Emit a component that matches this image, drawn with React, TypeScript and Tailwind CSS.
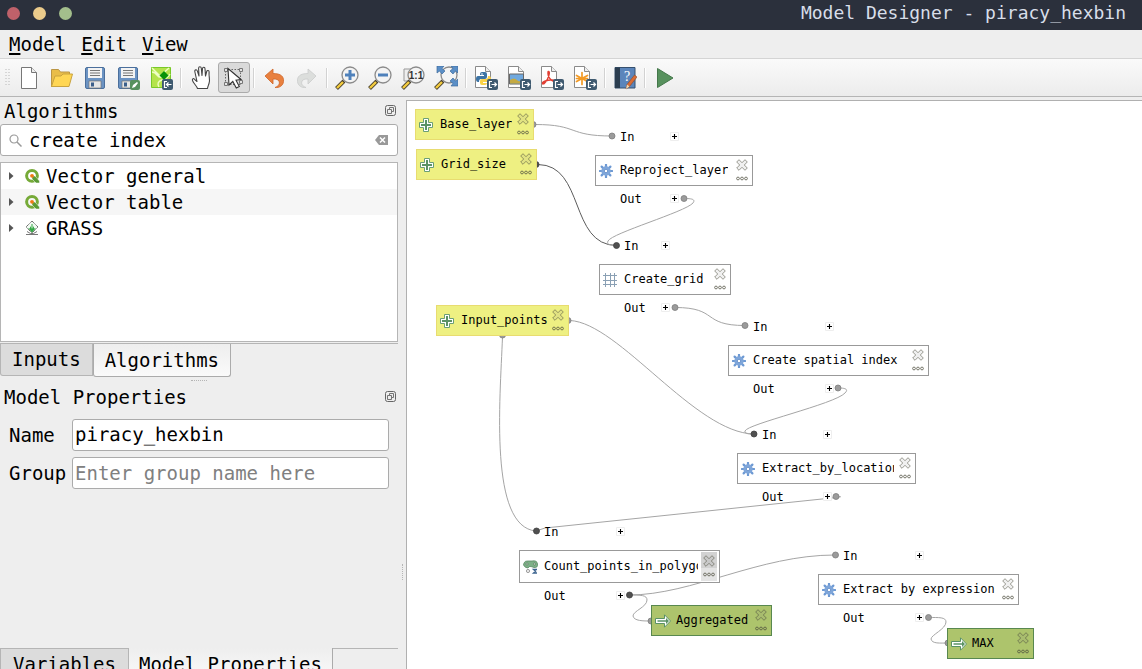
import React from "react";

type NodeKind = "input" | "algorithm" | "output";
type IconName = "plus" | "gear" | "grid" | "count" | "arrow";

interface ModelNode {
  label: string;
  kind: NodeKind;
  icon: IconName;
  x: number;
  y: number;
  w: number;
  h: number;
  hovered?: boolean;
}

const nodes: ModelNode[] = [
  { label: "Base_layer", kind: "input", icon: "plus", x: 8, y: 8, w: 119, h: 31 },
  { label: "Grid_size", kind: "input", icon: "plus", x: 9, y: 48, w: 121, h: 31 },
  { label: "Reproject_layer", kind: "algorithm", icon: "gear", x: 188, y: 54, w: 158, h: 31 },
  { label: "Create_grid", kind: "algorithm", icon: "grid", x: 192, y: 163, w: 132, h: 31 },
  { label: "Input_points", kind: "input", icon: "plus", x: 29, y: 204, w: 133, h: 31 },
  { label: "Create spatial index", kind: "algorithm", icon: "gear", x: 321, y: 244, w: 201, h: 31 },
  { label: "Extract_by_location", kind: "algorithm", icon: "gear", x: 330, y: 352, w: 179, h: 31 },
  { label: "Count_points_in_polygon", kind: "algorithm", icon: "count", x: 112, y: 449, w: 201, h: 33, hovered: true },
  { label: "Aggregated", kind: "output", icon: "arrow", x: 244, y: 504, w: 121, h: 31 },
  { label: "Extract by expression", kind: "algorithm", icon: "gear", x: 411, y: 473, w: 201, h: 31 },
  { label: "MAX", kind: "output", icon: "arrow", x: 540, y: 527, w: 87, h: 31 },
];

const edges: { d: string; dark?: boolean }[] = [
  { d: "M128 23.5 C172 23.5 160 35 205 35" },
  { d: "M131 63.5 C178 64 162 144 209.500 144.500", dark: true },
  { d: "M277 97.500 C284 97.500 289 98 286 102 C278 111 205 132 201 140 C199 144 205 144.500 209.500 144.500" },
  { d: "M268 206.500 C312 206.500 294 224.500 338 224.500" },
  { d: "M163 219.500 C212 222 288 332 347 333" },
  { d: "M95.500 236 C93 300 82 426 129 430" },
  { d: "M431 287 C438 287 442 288 438 292 C428 303 340 323 338 330 C337 333 343 333 347 333" },
  { d: "M429 395.500 C438 395.500 434 396 415 398 L138 427 L129 430" },
  { d: "M222 494 C285 494 352 454 428 454" },
  { d: "M222 494 C234 494 240 494 240 499 C240 506 226 510 226 515 C227 520 236 520 244 520" },
  { d: "M521.500 516.500 C532 516.500 539 516 539 521 C539 528 524 534 524 538 C525 543 533 542 541 542" },
];

const sockets: { x: number; y: number; dark?: boolean }[] = [
  { x: 126, y: 23.5 },
  { x: 129, y: 63.5, dark: true },
  { x: 205, y: 35 },
  { x: 277, y: 97.5 },
  { x: 209.5, y: 144.5, dark: true },
  { x: 268, y: 206.5 },
  { x: 338, y: 224.5 },
  { x: 161, y: 219.5 },
  { x: 95.5, y: 234 },
  { x: 431, y: 287 },
  { x: 347, y: 333, dark: true },
  { x: 429, y: 395.5 },
  { x: 129.5, y: 430, dark: true },
  { x: 222.5, y: 494, dark: true },
  { x: 428.5, y: 454 },
  { x: 244, y: 520 },
  { x: 521.5, y: 516.5 },
  { x: 541, y: 542 },
];

const nodeColours: Record<NodeKind, string> = {
  input: "border-[#e8dc70] bg-[#eef082]",
  algorithm: "border-[#999999] bg-white",
  output: "border-[#58884f] bg-[#adc46c]",
};

function NodeIcon({ name }: { name: IconName }) {
  if (name === "plus")
    return (
      <svg viewBox="0 0 14 14" className="size-3.5 shrink-0">
        <path d="M4.500 .5h5v4h4v5h-4v4h-5v-4h-4v-5h4z" fill="#fff" stroke="#6b9f74" />
        <path d="M6 2h2v4h4v2H8v4H6V8H2V6h4z" fill="#5a9265" />
      </svg>
    );
  if (name === "gear")
    return (
      <svg viewBox="0 0 14 14" className="size-3.5 shrink-0">
        {[0, 45, 90, 135].map((a) => (
          <path key={a} d="M7 .8v12.400" stroke="#6d99d3" strokeWidth="2.200" strokeLinecap="round" transform={`rotate(${a} 7 7)`} />
        ))}
        <circle cx="7" cy="7" r="4.700" fill="#7fa6da" />
        <circle cx="7" cy="7" r="1.700" fill="#fff" stroke="#5583c0" strokeWidth=".7" />
      </svg>
    );
  if (name === "grid")
    return (
      <svg viewBox="0 0 14 14" className="size-3.5 shrink-0">
        <path d="M2.500 0v14M7.500 0v14M11.500 0v14M0 2.500h14M0 7.500h14M0 11.500h14" stroke="#8aa0b4" fill="none" />
      </svg>
    );
  if (name === "count")
    return (
      <svg viewBox="0 0 15 14" className="h-3.5 w-[15px] shrink-0">
        <path d="M1 3Q2 .5 5 1L9 1Q14 0 14.500 4Q15 8 11 7.500L8 6.500Q6 6 5 8Q2 8 .5 5z" fill="#7db087" stroke="#5b8965" strokeWidth=".8" />
        <circle cx="4" cy="4" r="1" fill="#e8f2e9" stroke="#44664a" strokeWidth=".6" />
        <circle cx="11.500" cy="4" r="1" fill="#e8f2e9" stroke="#44664a" strokeWidth=".6" />
        <circle cx="5" cy="11" r="1.600" fill="#eee" stroke="#888" strokeWidth=".8" />
        <path d="M14 9.500h-3.500l2 1.700-2 1.800H14" fill="none" stroke="#3e6590" strokeWidth="1.300" />
      </svg>
    );
  return (
    <svg viewBox="0 0 16 14" className="h-3.5 w-4 shrink-0">
      <path d="M.5 4.500h9V.8L15.500 7l-6 6.200V9.500h-9z" fill="#fff" stroke="#5a9265" />
      <path d="M2.500 6.200h8.500V4l3 3-3 3V7.800H2.500z" fill="#5a9265" />
    </svg>
  );
}

function NodeControls({ hovered }: { hovered?: boolean }) {
  return (
    <div className={hovered ? "my-px flex w-4 shrink-0 flex-col items-center gap-1 bg-[#e4e4e4]" : "flex w-4 shrink-0 flex-col items-center gap-1"}>
      <button aria-label="Delete" className={hovered ? "flex w-4 justify-center bg-[#d2d2d2] pb-px pt-[3px]" : "flex w-4 justify-center pb-px pt-[3px]"}>
        <svg viewBox="0 0 12 12" className="size-3">
          <path
            d="M3 .7L6 3.700 9 .7 11.300 3 8.300 6l3 3L9 11.300l-3-3-3 3L.7 9l3-3-3-3z"
            fill="#808080"
            fillOpacity=".12"
            stroke="#4d4d3d"
            strokeOpacity=".62"
            strokeWidth=".9"
            strokeLinejoin="round"
          />
        </svg>
      </button>
      <button aria-label="Edit" className="block">
        <svg viewBox="0 0 12 5" className="h-[5px] w-3">
          {[2, 6, 10].map((x) => (
            <circle key={x} cx={x} cy="2.500" r="1.400" fill="none" stroke="#4d4d3d" strokeOpacity=".8" strokeWidth=".9" />
          ))}
        </svg>
      </button>
    </div>
  );
}

function Port({ label, above }: { label: string; above?: boolean }) {
  return (
    <div
      className={
        above
          ? "absolute -top-[27px] left-0 flex h-4 w-full items-center"
          : "absolute -bottom-5 left-0 flex h-4 w-full items-center"
      }
    >
      <span className="w-1/2 pl-[25px] pt-0.5">{label}</span>
      <button aria-label={`Expand ${label}`} className="-ml-1 bg-white">
        <svg viewBox="0 0 9 9" className="size-[9px]">
          <path d="M.5 .5h8v8h-8z" fill="#fff" stroke="#eeeeee" />
          <path d="M4.500 2v5M2 4.500h5" stroke="#000" strokeWidth="1.100" />
        </svg>
      </button>
    </div>
  );
}

function Canvas() {
  return (
    <main className="relative mt-[3px] min-w-0 flex-1 overflow-hidden border-l border-t border-[#b0b0b0] bg-white font-['DejaVu_Sans_Mono',monospace] text-[12px] leading-4">
      <svg className="absolute left-0 top-0 size-full" fill="none">
        {edges.map((e) => (
          <path key={e.d} d={e.d} stroke={e.dark ? "#5c5c5c" : "#a5a5a5"} />
        ))}
        {sockets.map((s) => (
          <circle
            key={`${s.x}-${s.y}`}
            cx={s.x}
            cy={s.y}
            r="3"
            fill={s.dark ? "#505050" : "#9b9b9b"}
            stroke={s.dark ? "#404040" : "#7d7d7d"}
            strokeWidth=".8"
          />
        ))}
      </svg>
      {nodes.map((n) => (
        <section key={n.label} className="absolute" style={{ left: n.x, top: n.y, width: n.w, height: n.h }}>
          {n.kind === "algorithm" && <Port label="In" above />}
          <div className={`flex h-full border pr-0.5 ${nodeColours[n.kind]}`}>
            <div className="mr-[3px] flex min-w-0 flex-1 items-center">
              <div className="flex w-6 shrink-0 pl-[3px]">
                <NodeIcon name={n.icon} />
              </div>
              <span className="overflow-hidden whitespace-nowrap pb-0.5">{n.label}</span>
            </div>
            <NodeControls hovered={n.hovered} />
          </div>
          {n.kind === "algorithm" && <Port label="Out" />}
        </section>
      ))}
    </main>
  );
}

/* ---------- toolbar drawings ---------- */

function ExportSheet({ children }: { children: React.ReactNode }) {
  return (
    <>
      <g transform="translate(-2 -1)">
        <path d="M3.500 1.500h10l5 5v16h-15z" fill="#fff" stroke="#8a8a8a" />
        <path d="M13.500 1.500v5h5" fill="#eee" stroke="#8a8a8a" />
        {children}
      </g>
      <rect x="13" y="13" width="11" height="11" rx="2" fill="#3f5a70" />
      <path d="M18 15.500h-2.500v6H18M17.500 18.500h5M20.500 16.500l2 2-2 2" fill="none" stroke="#fff" strokeWidth="1.200" />
    </>
  );
}

function Lens({ children }: { children?: React.ReactNode }) {
  return (
    <>
      <path d="M9 15L1.500 22.500" stroke="#4b4230" strokeWidth="4" />
      <path d="M8 16L2 22" stroke="#f4cc3e" strokeWidth="2.400" />
      <circle cx="15" cy="9" r="8" fill="#f4f4f4" stroke="#8b8b8b" strokeWidth="1.300" />
      {children}
    </>
  );
}

function Floppy() {
  return (
    <>
      <rect x="2.500" y="1.500" width="19" height="21" rx="1.500" fill="#6b93c3" stroke="#4b6f9c" />
      <path d="M5 2h14v10H5z" fill="#f3f3f3" />
      <path d="M7 4.500h10M7 7h10M7 9.500h10" stroke="#777" strokeWidth="1.200" />
      <path d="M6 15h12v7H6z" fill="#e6e6e6" stroke="#777" strokeWidth=".7" />
      <path d="M8 16.500h3v4H8z" fill="#3c5f8b" />
    </>
  );
}

const drawings: Record<string, React.ReactNode> = {
  "New model": (
    <>
      <path d="M4.500 1.500h10l5 5v16h-15z" fill="#fff" stroke="#777" />
      <path d="M14.500 1.500v5h5" fill="#eee" stroke="#777" />
    </>
  ),
  "Open model": (
    <>
      <path d="M1.500 21V3.500h7l2 2.500h9v4" fill="#e9bd48" stroke="#bb9645" />
      <path d="M1.500 20.500L5 10h6l2-2h9.500l-3.500 12.500z" fill="#ffd653" stroke="#c9a33f" />
    </>
  ),
  "Save model": <Floppy />,
  "Save model as": (
    <>
      <Floppy />
      <rect x="14" y="14" width="10" height="10" rx="2" fill="#57915d" />
      <path d="M16 22l1-3 4-3 1 1-3 4z" fill="#fff" />
    </>
  ),
  "Save model in project": (
    <>
      <path d="M2.500 1.500h19v20h-19z" fill="#b4e34c" stroke="#79c929" />
      <path d="M3 6q3 0 5 3t6 2M10 21q-3-5 3-7t8-6M3 2l8 8 9-8" fill="none" stroke="#eeffc4" strokeWidth="1.400" />
      <path d="M15 5l4.500 4.500L15 14l-4.500-4.500z" fill="#079307" />
      <rect x="13" y="13" width="11" height="11" rx="2" fill="#3f5a70" />
      <path d="M18 15.500h-2.500v6H18M22.500 18.500h-5M19.500 16.500l-2 2 2 2" fill="none" stroke="#fff" strokeWidth="1.200" />
    </>
  ),
  Pan: (
    <path
      d="M8.500 22.500c-1-3-4-5-5-8-.5-2 1-2.500 2-1.200L8 15.500 5.800 5.500c-.3-2 2-2.300 2.600-.4L10 10 9.600 2.300c0-2 2.500-2 2.700 0L13 9.500l.5-7c.2-1.800 2.500-1.700 2.500.2L16.500 10l1.200-4.500c.5-1.700 2.600-1.200 2.400.6C19.500 11 21.500 13 20 17.500c-.6 2-1.300 3-1.500 5z"
      fill="#fff"
      stroke="#444"
      strokeWidth="1.100"
      strokeLinejoin="round"
    />
  ),
  Select: (
    <>
      <path d="M3.500 3.500h15v15h-15z" fill="none" stroke="#666" strokeDasharray="1.500 1.500" />
      <path d="M2.500 2.500h3v3h-3zM17.500 2.500h3v3h-3zM2.500 16.500h3v3h-3zM17.500 14.500h3v3h-3z" fill="#e4e4e4" stroke="#777" />
      <path d="M6 2.500l1 16.500 3.800-3.500 3.500 6.500 3-1.500-3.300-6.300 5-.7z" fill="#fff" stroke="#333" strokeWidth="1.100" />
    </>
  ),
  Undo: (
    <path d="M3 10l8-7v4.500c8 0 11 3 10.500 8-.3 4-4 6.500-8.500 6 4-1.500 5-4 4-6.200-.8-1.900-2.500-2.300-6-2.300v5z" fill="#e8803f" stroke="#cf6427" strokeWidth=".8" />
  ),
  Redo: (
    <path d="M21 10l-8-7v4.500c-8 0-11 3-10.500 8 .3 4 4 6.500 8.500 6-4-1.500-5-4-4-6.200.8-1.900 2.500-2.300 6-2.300v5z" fill="#dcdedc" stroke="#cacccb" strokeWidth=".8" />
  ),
  "Zoom in": (
    <Lens>
      <path d="M15 4v10M10 9h10" stroke="#4f81bb" strokeWidth="3" />
    </Lens>
  ),
  "Zoom out": (
    <Lens>
      <path d="M10 9h10" stroke="#4f81bb" strokeWidth="3" />
    </Lens>
  ),
  "Zoom to 100%": (
    <>
      <path d="M3 3h12v12H3z" fill="#eee" stroke="#999" />
      <Lens>
        <text x="15" y="12.500" textAnchor="middle" fontSize="10" fontWeight="bold" fontFamily="Liberation Sans, sans-serif" fill="#333">
          1:1
        </text>
      </Lens>
    </>
  ),
  "Zoom full": (
    <>
      <Lens />
      <path d="M3 0h7L8 2.500 11 5 8 8 5.500 5 3 7zM24 0v7l-2.500-2L19 8l-3-3 3-2.500L17 0zM24 20h-7l2-2.500L16 15l3-3 2.500 3 2.500-2z" fill="#5b8fc7" stroke="#3f6b9c" strokeWidth=".7" />
    </>
  ),
  "Export as Python": (
    <ExportSheet>
      <path d="M10 7h3q2 0 2 2v3q0 2-2 2H9q-2 0-2 3H6q-2 0-2-3t2-3h6v-1H8V9q0-2 2-2z" fill="#3d74a5" />
      <path d="M13 20h-3q-2 0-2-2v-2q0-2 2-2h4q2 0 2-3h1q2 0 2 3t-2 3h-6v1h4q0 2-2 2z" fill="#fbd348" />
      <circle cx="10" cy="9" r=".8" fill="#fff" />
    </ExportSheet>
  ),
  "Export as image": (
    <ExportSheet>
      <path d="M4.500 9h14v10h-14z" fill="#70a9df" stroke="#666" />
      <path d="M5 15q4-3 7 0t6-1v4.500H5z" fill="#c5aa43" />
    </ExportSheet>
  ),
  "Export as PDF": (
    <ExportSheet>
      <path d="M10.500 6.500c1.500 0 .8 4-1 7.500S5 20 4.500 18.500s5-4 9.500-3.500 3 1.500 1 1-5-4-5-7 0-2.500.5-2.500z" fill="none" stroke="#e23e32" strokeWidth="1.400" />
    </ExportSheet>
  ),
  "Export as SVG": (
    <ExportSheet>
      <path d="M11 7.500v12M5.500 10.500l11 6M16.500 10.500l-11 6M5.500 13.500h11" stroke="#f39a24" strokeWidth="1.700" strokeLinecap="round" />
    </ExportSheet>
  ),
  Help: (
    <>
      <path d="M2 1.500h20v20.500H2z" fill="#5b85bb" stroke="#36506f" />
      <path d="M2 1.500h5v20.500H2z" fill="#2c3e50" />
      <text x="14" y="15" textAnchor="middle" fontSize="14" fontFamily="Liberation Serif, serif" fill="#fff">
        ?
      </text>
      <path d="M13 23l1-4.500 7.500-9.500 2.500 2-7.500 9.500z" fill="#d96c35" stroke="#8a4a2a" strokeWidth=".6" />
      <path d="M13 23l1-4.500 2.500 2z" fill="#e9d9b8" />
    </>
  ),
  "Run model": <path d="M4.500 2.500L20 12 4.500 21.500z" fill="#57915d" stroke="#44774a" />,
};

const toolGroups: string[][] = [
  ["New model", "Open model", "Save model", "Save model as", "Save model in project"],
  ["Pan", "Select"],
  ["Undo", "Redo"],
  ["Zoom in", "Zoom out", "Zoom to 100%", "Zoom full"],
  ["Export as Python", "Export as image", "Export as PDF", "Export as SVG"],
  ["Help"],
  ["Run model"],
];

function Toolbar() {
  return (
    <div className="flex h-[39px] shrink-0 items-center gap-px border-b border-t border-b-[#b5b5b5] border-t-[#d4d4d4] bg-linear-to-b from-[#fafafa] to-[#ececec] pl-[5px]">
      <svg className="mr-0.5 h-[18px] w-[5px]" viewBox="0 0 5 18">
        <path d="M1 0v18M4 0v18" stroke="#b8b8b8" strokeDasharray="1 2" />
      </svg>
      {toolGroups.map((group, i) => (
        <React.Fragment key={group[0]}>
          {i > 0 && <div className="mx-0.5 h-5 w-0.5 border-l border-[#d2d2d2] bg-white" />}
          {group.map((tool) => (
            <button
              key={tool}
              aria-label={tool}
              className={
                tool === "Select"
                  ? "flex h-[31px] w-8 items-center justify-center rounded-[3px] border border-[#ababab] bg-[#dadada]"
                  : "flex h-[31px] w-8 items-center justify-center"
              }
            >
              <svg viewBox="0 0 24 24" className="size-6 shrink-0" fill="none">
                {drawings[tool]}
              </svg>
            </button>
          ))}
        </React.Fragment>
      ))}
    </div>
  );
}

/* ---------- docks ---------- */

function DockTitle({ children }: { children: React.ReactNode }) {
  return (
    <div className="flex h-[27px] shrink-0 items-center justify-between pl-1 pr-0.5">
      <h2>{children}</h2>
      <button aria-label="Float panel">
        <svg viewBox="0 0 11 11" className="size-[11px]" fill="none" stroke="#666">
          <rect x=".5" y=".5" width="10" height="10" rx="2" />
          <path d="M4.500 4V2.500h4v4H7M2.500 4.500h4v4h-4z" strokeWidth=".9" />
        </svg>
      </button>
    </div>
  );
}

function QgisIcon() {
  return (
    <svg viewBox="0 0 16 16" className="size-4 shrink-0" fill="none">
      <circle cx="8" cy="7.800" r="5.400" stroke="#76aa38" strokeWidth="3" />
      <path d="M8 8h3l4.500 5v2H12L8 11z" fill="#5b9a34" stroke="#fff" strokeWidth=".5" />
      <circle cx="8" cy="7.800" r="1.900" fill="#ee7913" />
    </svg>
  );
}

function GrassIcon() {
  return (
    <svg viewBox="0 0 16 16" className="size-4 shrink-0" fill="none">
      <path d="M8 1l6 6-6 6-6-6z" fill="#f2faf3" stroke="#555" strokeDasharray="1.200 .6" />
      <path d="M8 12.500L4 8l2 .5V6l2 3 2-3v2.500l2-.5z" fill="#35a845" />
      <path d="M8 12V4" stroke="#35a845" />
      <path d="M2 14.500h12M3 11.500l3.500 2h3l3.500-2" stroke="#777" />
    </svg>
  );
}

const treeRows = [
  { label: "Vector general", icon: <QgisIcon /> },
  { label: "Vector table", icon: <QgisIcon /> },
  { label: "GRASS", icon: <GrassIcon /> },
];

export default function App() {
  return (
    <div className="flex h-screen flex-col overflow-hidden bg-[#eeeeee] font-['DejaVu_Sans_Mono',monospace] text-[19px] leading-6 text-black">
      <header className="flex h-[30px] shrink-0 items-center justify-between bg-[#2b303c] pb-1 pl-[7px] pr-4 text-[18px] text-[#d8dee9]">
        <div className="flex gap-[13px]">
          <button aria-label="Close" className="size-[13px] rounded-full bg-[#bf616a]" />
          <button aria-label="Minimize" className="size-[13px] rounded-full bg-[#ebcb8b]" />
          <button aria-label="Maximize" className="size-[13px] rounded-full bg-[#a3be8c]" />
        </div>
        <h1>Model Designer - piracy_hexbin</h1>
      </header>

      <nav className="flex h-7 shrink-0 items-center gap-[15px] pl-[9px]">
        {["Model", "Edit", "View"].map((m) => (
          <button key={m}>
            <span className="underline decoration-2 underline-offset-2">{m[0]}</span>
            {m.slice(1)}
          </button>
        ))}
      </nav>

      <Toolbar />

      <div className="flex min-h-0 flex-1">
        <aside className="flex w-[398px] shrink-0 flex-col">
          <DockTitle>Algorithms</DockTitle>
          <div className="flex h-8 shrink-0 items-center rounded-[3px] border border-[#ababab] bg-white px-2">
            <svg viewBox="0 0 13 13" className="size-[13px] shrink-0" fill="none" stroke="#999" strokeWidth="1.200">
              <circle cx="5" cy="5" r="4" />
              <path d="M8 8l4.500 4.500" strokeWidth="1.500" />
            </svg>
            <input aria-label="Search algorithms" defaultValue="create index" className="ml-[7px] h-7 min-w-0 flex-1 bg-transparent leading-7 outline-none" />
            <button aria-label="Clear search">
              <svg viewBox="0 0 14 12" className="h-3 w-3.5">
                <path d="M4 1h9v10H4L0 6z" fill="#999" />
                <path d="M5 3.500l5 5M10 3.500l-5 5" stroke="#fff" strokeWidth="1.500" />
              </svg>
            </button>
          </div>

          <ul className="mt-1.5 h-[180px] shrink-0 border border-[#b5b5b5] bg-white">
            {treeRows.map((r) => (
              <li key={r.label} className="flex h-[26px] items-center pl-2 even:bg-[#f6f6f6]">
                <svg viewBox="0 0 5 8" className="mr-[10px] h-2 w-[5px]">
                  <path d="M0 0l4.500 4L0 8z" fill="#555" />
                </svg>
                {r.icon}
                <span className="ml-1.5">{r.label}</span>
              </li>
            ))}
          </ul>

          <div className="mt-px flex h-[35px] shrink-0 items-start border-t border-[#b5b5b5]" role="tablist">
            <button role="tab" className="h-8 rounded-bl-[3px] border border-t-0 border-[#b5b5b5] bg-[#dcdcdc] px-[11px] pb-0.5">
              Inputs
            </button>
            <button role="tab" aria-selected className="h-[33px] rounded-b-[3px] border border-t-0 border-[#ababab] bg-linear-to-b from-[#eeeeee] to-[#fafafa] px-[11px]">
              Algorithms
            </button>
          </div>

          <div className="mt-0.5 h-px w-4 shrink-0 self-center border-t border-dotted border-[#b5b5b5]" />

          <div className="mt-0.5 flex min-h-0 flex-1 flex-col">
            <DockTitle>Model Properties</DockTitle>
            <div className="mt-[9px] grid grid-cols-[63px_1fr] items-center gap-y-1.5 px-[9px]">
              <label htmlFor="model-name">Name</label>
              <input id="model-name" defaultValue="piracy_hexbin" className="h-8 min-w-0 rounded-[3px] border border-[#ababab] bg-white px-0.5 leading-7 outline-none [text-rendering:geometricPrecision]" />
              <label htmlFor="model-group">Group</label>
              <input id="model-group" placeholder="Enter group name here" className="h-8 min-w-0 rounded-[3px] border border-[#ababab] bg-white px-0.5 leading-7 outline-none placeholder:text-[#808080]" />
            </div>
          </div>

          <div className="flex h-[21px] shrink-0 items-start overflow-hidden" role="tablist">
            <button role="tab" className="h-8 shrink-0 border border-[#b5b5b5] bg-[#dcdcdc] px-3">
              Variables
            </button>
            <button role="tab" aria-selected className="h-8 shrink-0 border-r border-[#ababab] bg-linear-to-b from-[#eeeeee] to-[#fafafa] px-[10px]">
              Model Properties
            </button>
            <div className="flex-1 border-t border-[#b5b5b5]" />
          </div>
        </aside>

        <div className="flex w-2 shrink-0 flex-col items-center">
          <div className="mt-[467px] h-4 w-px border-l border-dotted border-[#b5b5b5]" />
        </div>

        <Canvas />
      </div>
    </div>
  );
}
